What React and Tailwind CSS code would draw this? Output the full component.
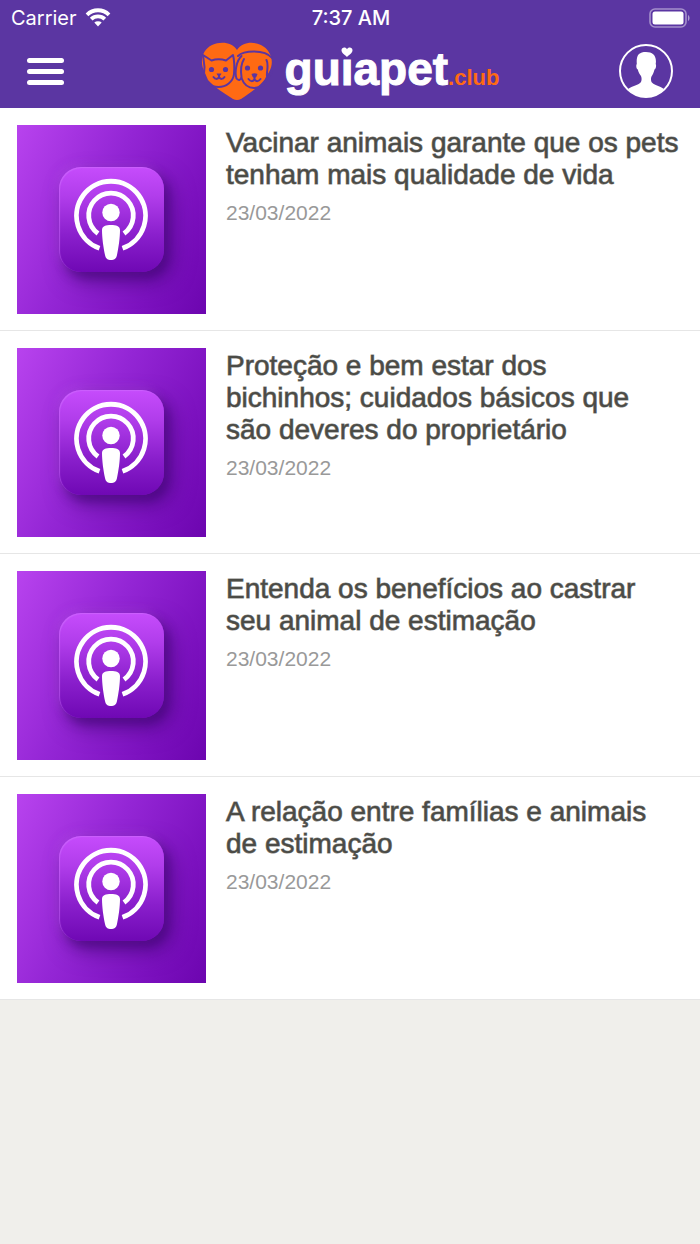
import React from "react";

const posts = [
  { title: "Vacinar animais garante que os pets tenham mais qualidade de vida", date: "23/03/2022" },
  { title: "Proteção e bem estar dos bichinhos; cuidados básicos que são deveres do proprietário", date: "23/03/2022" },
  { title: "Entenda os benefícios ao castrar seu animal de estimação", date: "23/03/2022" },
  { title: "A relação entre famílias e animais de estimação", date: "23/03/2022" },
];

function WifiIcon() {
  return (
    <svg viewBox="0 0 26 20" className="h-5 w-[26px]" fill="none" stroke="#fff" strokeWidth="3.8" aria-hidden="true">
      <path d="M2 6.800A15.600 15.600 0 0 1 24 6.800" />
      <path d="M6.200 11.200A9.700 9.700 0 0 1 19.800 11.200" />
      <path d="M9.300 14.600A5.400 5.400 0 0 1 16.700 14.600L13 18.600Z" fill="#fff" stroke="none" />
    </svg>
  );
}

function BatteryIcon() {
  return (
    <svg viewBox="0 0 42 20" className="h-5 w-[42px]" aria-hidden="true">
      <rect x="1" y="1" width="36" height="18" rx="5" fill="none" stroke="#fff" strokeOpacity=".45" strokeWidth="1.6" />
      <rect x="3.500" y="3.500" width="31" height="13" rx="2.500" fill="#fff" />
      <path d="M39 7c2 .7 2 5.300 0 6z" fill="#fff" fillOpacity=".5" />
    </svg>
  );
}

function PetHeart() {
  return (
    <svg viewBox="0 0 72 60" className="h-[60px] w-[72px]" aria-hidden="true">
      <path
        d="M36 9C41 1 52 0 60 4C70 9 74 21 68 31L64 38C59 45 49 52 40 58Q36 60 32 58C23 52 13 46 7 39L4 32C-2 21 1 9 11 4C20 0 31 1 36 9Z"
        fill="#ff6a13"
      />
      <g fill="none" stroke="#5b36a2" strokeWidth="2" strokeLinecap="round" strokeLinejoin="round">
        <path d="M3 33L3.500 26L2 14L10.500 19.500Q17.500 17 25 19.500L32 14C33.500 20 33.500 27 33 33C32 41 25 46 17.500 46C10 46 3 41 3 33" />
        <path d="M37 15C41 11 47 10.500 53 10.500C61 10.500 67 12 71 17" />
        <path d="M40.500 15C35 20 33.500 32 35.500 37.500C37.500 40 40.500 39 40.500 36C39.500 29 40.500 22 43 18" />
        <path d="M40.500 37C43 44 48 47 53 47C60 47 65 43 66 36" />
        <path d="M65.500 19C68 24 65.500 30 66 35Q69 37 71 29" />
        <path d="M12.500 36Q15 39.500 18 36.500Q21 39.500 23.500 36M18 34V36" />
        <path d="M47.500 38Q50.500 42 53.500 38.500Q56.500 42 59.500 38M53.500 35V38" />
      </g>
      <g fill="#5b36a2">
        <circle cx="10.500" cy="28.500" r="2.600" />
        <circle cx="24.500" cy="28.500" r="2.600" />
        <circle cx="46.500" cy="27" r="2.600" />
        <circle cx="59.500" cy="27" r="2.600" />
        <path d="M15.500 32.500H20.500Q20 34.500 18 35.500Q16 34.500 15.500 32.500Z" />
        <path d="M50.500 33Q53.500 31.500 56.500 33Q56 36 53.500 37Q51 36 50.500 33Z" />
      </g>
    </svg>
  );
}

function Wordmark() {
  return (
    <span className="flex items-baseline pt-1 leading-[60px]">
      <span className="relative text-[46px] font-bold text-white [-webkit-text-stroke:1px_#fff]">
        guiapet
        <svg viewBox="0 0 14 12" className="absolute left-[55px] top-[8px] h-3 w-[14px]" aria-hidden="true">
          <rect width="14" height="12" fill="#5b36a2" />
          <path d="M7 2.200C8-.2 12.500-.2 12.500 3.300C12.500 6 9.500 7.500 7 10C4.500 7.500 1.500 6 1.500 3.300C1.500-.2 6-.2 7 2.200Z" fill="#fff" />
        </svg>
      </span>
      <span className="text-[22px] font-bold text-[#ff6a13]">.club</span>
    </span>
  );
}

function ProfileIcon() {
  return (
    <svg viewBox="0 0 54 54" className="size-[54px]" aria-hidden="true">
      <circle cx="27" cy="27" r="26" fill="none" stroke="#fff" strokeWidth="2" />
      <path
        d="M9 45C13 42 20 41 22 38C22.800 36 22.800 34 22 32C20.500 30 19.300 28 18.800 25.500C17.300 25 16.800 21 17.800 20C17 11 20 8 27 8C34 8 38 12 36.700 20C37.500 21 37 25 35.500 25.500C35 28 33.800 30.500 32.500 32.500C31.800 34 31.800 36 32.500 38C34.500 41 41 42 45 45C36 55.500 18 55.500 9 45Z"
        fill="#fff"
      />
    </svg>
  );
}

function PodcastCover() {
  return (
    <div className="flex size-[189px] shrink-0 items-center justify-center bg-[linear-gradient(115deg,#b843ee_0%,#9426d5_42%,#7d12c0_75%,#6c05af_100%)]">
      <div className="flex size-[105px] items-center justify-center rounded-[22px] bg-[linear-gradient(180deg,#c64cfc_0%,#b13deb_28%,#8a1fcc_65%,#6f08b4_100%)] shadow-[8px_10px_22px_#42067699,5px_6px_10px_#42067688,-2px_-2px_10px_#c660f555,inset_1px_1px_1px_#d070ff88]">
        <svg viewBox="1 2 76 84" className="h-[84px] w-[76px]" aria-hidden="true">
          <g fill="none" stroke="#fff" strokeWidth="4.800">
            <path d="M26.500 72.300A34.500 34.500 0 1 1 49.500 72.300" />
            <path d="M25 57.500A22.300 22.300 0 1 1 51 57.500" />
          </g>
          <circle cx="38" cy="36.500" r="8.700" fill="#fff" />
          <path d="M29 54C29 50 33 49 38 49C43 49 47 50 47 54C47 62 45.500 72 44 79C43.300 83 41 84 38 84C35 84 32.700 83 32 79C30.500 72 29 62 29 54Z" fill="#fff" />
        </svg>
      </div>
    </div>
  );
}

function PostRow({ title, date }) {
  return (
    <li className="border-b border-[#e6e6e6]">
      <a href="#" className="flex gap-5 pl-[17px] pr-[21px] pt-[17px] pb-4">
        <PodcastCover />
        <div className="min-w-0 flex-1 pt-0.5">
          <h2 className="text-[28px] leading-8 text-[#4b4b46] [-webkit-text-stroke:1px_#4b4b46aa]">{title}</h2>
          <p className="mt-2 text-[21px] leading-7 text-[#999]">{date}</p>
        </div>
      </a>
    </li>
  );
}

export default function App() {
  return (
    <div className="min-h-screen bg-[#f0efeb] font-['Liberation_Sans',Arial,sans-serif]">
      <header className="bg-[#5b36a2] text-white">
        <div className="grid h-9 grid-cols-3 items-center pl-[11px] pr-[9px] font-['Inter',sans-serif] text-[20px]">
          <div className="flex items-center gap-2">
            <span>Carrier</span>
            <WifiIcon />
          </div>
          <span className="text-center font-medium">7:37 AM</span>
          <div className="flex justify-end">
            <BatteryIcon />
          </div>
        </div>
        <div className="flex h-[72px] items-center justify-between px-[27px] pb-0.5">
          <button type="button" aria-label="Menu" className="flex w-[54px] flex-col gap-1.5">
            <span className="h-[5px] w-[37px] rounded-full bg-white" />
            <span className="h-[5px] w-[37px] rounded-full bg-white" />
            <span className="h-[5px] w-[37px] rounded-full bg-white" />
          </button>
          <a href="#" aria-label="guiapet.club" className="flex items-center gap-3">
            <PetHeart />
            <Wordmark />
          </a>
          <button type="button" aria-label="Perfil">
            <ProfileIcon />
          </button>
        </div>
      </header>
      <main>
        <ul className="bg-white">
          {posts.map((post) => (
            <PostRow key={post.title} title={post.title} date={post.date} />
          ))}
        </ul>
      </main>
    </div>
  );
}
